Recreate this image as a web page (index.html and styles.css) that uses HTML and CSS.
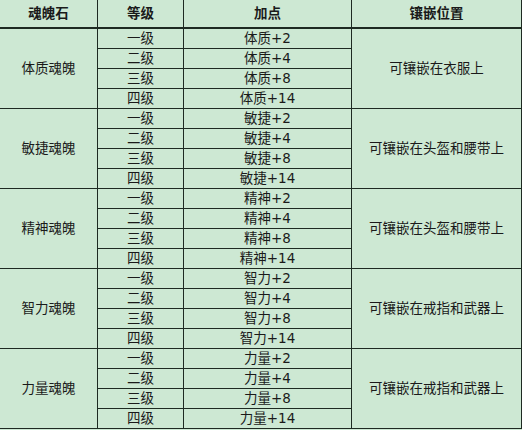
FILE: index.html
```html
<!DOCTYPE html>
<html lang="zh">
<head>
<meta charset="utf-8">
<link rel="stylesheet" href="styles.css">
</head>
<body>
<div class="table">
  <div class="cell head">魂魄石</div>
  <div class="cell head">等级</div>
  <div class="cell head">加点</div>
  <div class="cell head">镶嵌位置</div>

  <div class="cell group" style="grid-row: 2 / span 4">体质魂魄</div>
  <div class="cell">一级</div><div class="cell">体质+2</div>
  <div class="cell group pos" style="grid-row: 2 / span 4">可镶嵌在衣服上</div>
  <div class="cell">二级</div><div class="cell">体质+4</div>
  <div class="cell">三级</div><div class="cell">体质+8</div>
  <div class="cell">四级</div><div class="cell">体质+14</div>

  <div class="cell group" style="grid-row: 6 / span 4">敏捷魂魄</div>
  <div class="cell">一级</div><div class="cell">敏捷+2</div>
  <div class="cell group pos" style="grid-row: 6 / span 4">可镶嵌在头盔和腰带上</div>
  <div class="cell">二级</div><div class="cell">敏捷+4</div>
  <div class="cell">三级</div><div class="cell">敏捷+8</div>
  <div class="cell">四级</div><div class="cell">敏捷+14</div>

  <div class="cell group" style="grid-row: 10 / span 4">精神魂魄</div>
  <div class="cell">一级</div><div class="cell">精神+2</div>
  <div class="cell group pos" style="grid-row: 10 / span 4">可镶嵌在头盔和腰带上</div>
  <div class="cell">二级</div><div class="cell">精神+4</div>
  <div class="cell">三级</div><div class="cell">精神+8</div>
  <div class="cell">四级</div><div class="cell">精神+14</div>

  <div class="cell group" style="grid-row: 14 / span 4">智力魂魄</div>
  <div class="cell">一级</div><div class="cell">智力+2</div>
  <div class="cell group pos" style="grid-row: 14 / span 4">可镶嵌在戒指和武器上</div>
  <div class="cell">二级</div><div class="cell">智力+4</div>
  <div class="cell">三级</div><div class="cell">智力+8</div>
  <div class="cell">四级</div><div class="cell">智力+14</div>

  <div class="cell group" style="grid-row: 18 / span 4">力量魂魄</div>
  <div class="cell">一级</div><div class="cell">力量+2</div>
  <div class="cell group pos" style="grid-row: 18 / span 4">可镶嵌在戒指和武器上</div>
  <div class="cell">二级</div><div class="cell">力量+4</div>
  <div class="cell">三级</div><div class="cell">力量+8</div>
  <div class="cell">四级</div><div class="cell">力量+14</div>
</div>
</body>
</html>
```
FILE: styles.css
```css
html, body {
  margin: 0;
  padding: 0;
  background: #cde8d3;
}
.table {
  display: grid;
  grid-template-columns: 97px 85px 167px 169px;
  grid-template-rows: 28px repeat(20, 19px);
  grid-auto-flow: row dense;
  gap: 1px;
  width: 521px;
  background: #1e2a22;
  border-right: 1px solid #1e2a22;
  border-bottom: 1px solid #1e2a22;
  font-family: "DejaVu Sans", "Noto Sans CJK SC", sans-serif;
  font-size: 13.5px;
  color: #1a1a1a;
}
.cell {
  background: #cde8d3;
  display: flex;
  align-items: center;
  justify-content: center;
  line-height: 1;
  white-space: nowrap;
}
.head {
  font-weight: bold;
  border-bottom: 1px solid #1e2a22;
  height: 27px;
}
.group {
  grid-column: 1;
}
.pos {
  grid-column: 4;
}
```
